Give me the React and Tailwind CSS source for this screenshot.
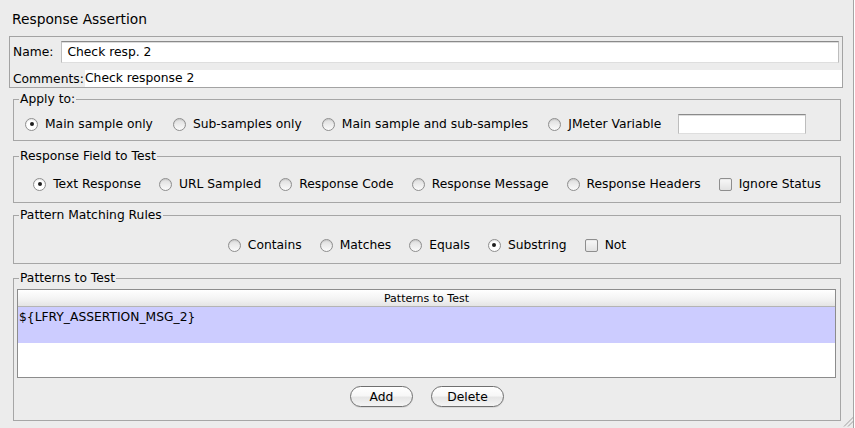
import React from "react";

function Radio({ checked, label }) {
  return (
    <div className="flex items-center">
      <span
        className={`w-[13px] h-[13px] rounded-full border border-[#8e8e8e] flex items-center justify-center shadow-[inset_0_1px_1px_rgba(0,0,0,0.10)] ${
          checked ? "bg-white" : "bg-[linear-gradient(to_bottom,#dddddd,#fbfbfb)]"
        }`}
      >
        {checked && <span className="w-[4px] h-[4px] rounded-full bg-[#1e1e1e]" />}
      </span>
      <span className="ml-[7px] leading-[16px]">{label}</span>
    </div>
  );
}

function Check({ label }) {
  return (
    <div className="flex items-center">
      <span className="w-[13px] h-[13px] rounded-[2px] border border-[#8e8e8e] bg-[linear-gradient(to_bottom,#f8f8f8,#e2e2e2)] shadow-[inset_0_1px_1px_rgba(0,0,0,0.06)]" />
      <span className="ml-[7px] leading-[16px]">{label}</span>
    </div>
  );
}

function Group({ title, className = "", children }) {
  return (
    <fieldset className={`ml-[13px] w-[828px] border border-[#a6a6a6] px-0 ${className}`}>
      <legend className="ml-[5px] px-[1px] text-[12.3px] leading-[14px]">{title}</legend>
      {children}
    </fieldset>
  );
}

function Button({ children, w }) {
  return (
    <div
      className={`${w} h-[21px] rounded-full border border-[#707070] bg-[linear-gradient(to_bottom,#ffffff_0%,#f7f7f7_45%,#e6e6e6_55%,#f4f4f4_100%)] flex items-center justify-center text-[12.3px] leading-[14px] shadow-[0_1px_0_rgba(0,0,0,0.08)]`}
    >
      {children}
    </div>
  );
}

export default function App() {
  return (
    <div className="relative w-[855px] h-[428px] bg-white overflow-hidden">
      <div className="w-[854px] h-[428px] bg-[#ececec] border-r border-[#a5a5a5] font-['DejaVu_Sans',sans-serif] text-[12.3px] text-black">
        <div className="pl-[12px] pt-[9px] h-[36px] text-[13.8px] leading-[20px]">Response Assertion</div>

        <div className="ml-[9px] w-[834px] border border-[#a3a3a3] flex flex-col">
          <div className="flex items-center pt-[4px] pl-[3px] pr-[3px]">
            <span className="leading-[16px]">Name:</span>
            <div className="ml-[8px] flex-1 h-[22px] bg-white border border-t-[#8a8a8a] border-x-[#bdbdbd] border-b-[#dedede] shadow-[inset_0_1px_0_#dcdcdc] flex items-center pl-[5px]">
              <span className="leading-[16px]">Check resp. 2</span>
            </div>
          </div>
          <div className="flex items-end mt-[7px] pl-[3px] h-[17px]">
            <span className="leading-[16px] w-[72px] shrink-0">Comments:</span>
            <div className="flex-1 h-[17px] bg-white leading-[16px]">Check response 2</div>
          </div>
        </div>

        <Group title="Apply to:" className="mt-[4px]">
          <div className="flex items-center pl-[11px] pt-[8px] pb-[6px] gap-[20px]">
            <Radio checked label="Main sample only" />
            <Radio label="Sub-samples only" />
            <Radio label="Main sample and sub-samples" />
            <div className="flex items-center">
              <Radio label="JMeter Variable" />
              <div className="ml-[17px] w-[128px] h-[20px] bg-white border border-t-[#8a8a8a] border-x-[#bdbdbd] border-b-[#dedede] shadow-[inset_0_1px_0_#dcdcdc]" />
            </div>
          </div>
        </Group>

        <Group title="Response Field to Test" className="mt-[8px]">
          <div className="flex items-center justify-center pt-[13px] pb-[10px] gap-[18px]">
            <Radio checked label="Text Response" />
            <Radio label="URL Sampled" />
            <Radio label="Response Code" />
            <Radio label="Response Message" />
            <Radio label="Response Headers" />
            <Check label="Ignore Status" />
          </div>
        </Group>

        <Group title="Pattern Matching Rules" className="mt-[5px]">
          <div className="flex items-center justify-center pt-[15px] pb-[10px] gap-[18px]">
            <Radio label="Contains" />
            <Radio label="Matches" />
            <Radio label="Equals" />
            <Radio checked label="Substring" />
            <Check label="Not" />
          </div>
        </Group>

        <Group title="Patterns to Test" className="mt-[7px]">
          <div className="pt-[4px] px-[3px] pb-[13px]">
            <div className="w-[819px] h-[89px] border border-[#8c8c8c] bg-white flex flex-col">
              <div className="h-[17px] border-b border-[#b4b4b4] bg-[linear-gradient(to_bottom,#ffffff,#f2f2f2_60%,#e4e4e4)] flex items-center justify-center text-[11px] leading-[13px]">
                Patterns to Test
              </div>
              <div className="h-[36px] bg-[#ccccff] pl-[1px] pt-[3px] leading-[15px]">
                {"${LFRY_ASSERTION_MSG_2}"}
              </div>
            </div>
            <div className="flex justify-center gap-[18px] mt-[8px]">
              <Button w="w-[63px]">Add</Button>
              <Button w="w-[73px]">Delete</Button>
            </div>
          </div>
        </Group>
      </div>
      <svg className="absolute right-[1px] bottom-[1px]" width="11" height="11" viewBox="0 0 11 11">
        <line x1="10.5" y1="1" x2="1" y2="10.5" stroke="#a0a0a0" strokeWidth="1" />
        <line x1="10.5" y1="5" x2="5" y2="10.5" stroke="#a0a0a0" strokeWidth="1" />
      </svg>
    </div>
  );
}
